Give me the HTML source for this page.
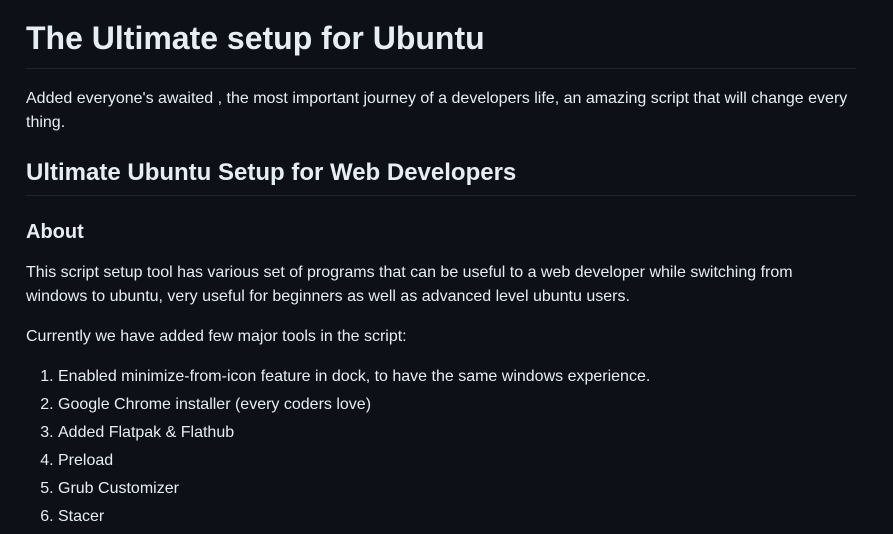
<!DOCTYPE html>
<html><head><meta charset="utf-8"><style>
html,body{margin:0;background:#0d1117;}
body{width:893px;height:534px;overflow:hidden;color:#e6edf3;font-family:"Liberation Sans",Arial,sans-serif;font-size:16px;line-height:1.5;}
.c{padding:18px 37px 0 26px;}
h1,h2,h3{font-weight:600;margin:0;}
h1{font-size:32px;line-height:40px;padding-bottom:10px;border-bottom:1px solid #21262d;margin-bottom:18px;}
h2{font-size:24px;line-height:30px;padding-bottom:7px;border-bottom:1px solid #21262d;margin-top:23px;margin-bottom:24px;}
h3{font-size:20px;line-height:25px;margin-bottom:16px;}
p{margin:0 0 16px;}
ol{margin:0;padding-left:32px;}
li+li{margin-top:4px;}
</style></head><body><div class="c">
<h1>The Ultimate setup for Ubuntu</h1>
<p>Added everyone's awaited , the most important journey of a developers life, an amazing script that will change every thing.</p>
<h2>Ultimate Ubuntu Setup for Web Developers</h2>
<h3>About</h3>
<p>This script setup tool has various set of programs that can be useful to a web developer while switching from windows to ubuntu, very useful for beginners as well as advanced level ubuntu users.</p>
<p>Currently we have added few major tools in the script:</p>
<ol>
<li>Enabled minimize-from-icon feature in dock, to have the same windows experience.</li>
<li>Google Chrome installer (every coders love)</li>
<li>Added Flatpak &amp; Flathub</li>
<li>Preload</li>
<li>Grub Customizer</li>
<li>Stacer</li>
</ol>
</div></body></html>
